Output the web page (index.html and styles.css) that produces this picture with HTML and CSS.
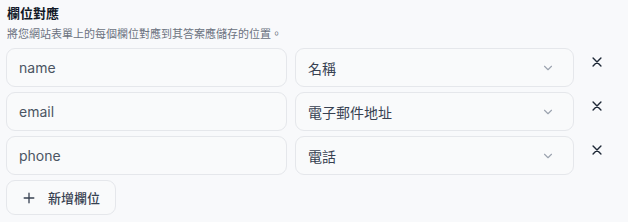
FILE: index.html
```html
<!DOCTYPE html>
<html lang="zh-Hant">
<head>
    <meta charset="UTF-8">
    <meta name="viewport" content="width=device-width, initial-scale=1.0">
    <title>欄位對應</title>
    <link rel="stylesheet" href="styles.css">
</head>
<body>
    <div class="mapping">
        <h2 class="mapping-title">欄位對應</h2>
        <p class="mapping-desc">將您網站表單上的每個欄位對應到其答案應儲存的位置。</p>

        <div class="rows">
            <div class="row">
                <input class="field-input" type="text" value="name">
                <div class="select">
                    <span>名稱</span>
                    <svg class="chevron" viewBox="0 0 16 16" width="14" height="14"><path d="M4 6l4 4 4-4" fill="none" stroke="currentColor" stroke-width="1.3" stroke-linecap="round" stroke-linejoin="round"/></svg>
                </div>
                <button class="remove" aria-label="移除">
                    <svg viewBox="0 0 16 16" width="14" height="14"><path d="M3.5 3.5l9 9M12.5 3.5l-9 9" fill="none" stroke="currentColor" stroke-width="1.6" stroke-linecap="round"/></svg>
                </button>
            </div>
            <div class="row">
                <input class="field-input" type="text" value="email">
                <div class="select">
                    <span>電子郵件地址</span>
                    <svg class="chevron" viewBox="0 0 16 16" width="14" height="14"><path d="M4 6l4 4 4-4" fill="none" stroke="currentColor" stroke-width="1.3" stroke-linecap="round" stroke-linejoin="round"/></svg>
                </div>
                <button class="remove" aria-label="移除">
                    <svg viewBox="0 0 16 16" width="14" height="14"><path d="M3.5 3.5l9 9M12.5 3.5l-9 9" fill="none" stroke="currentColor" stroke-width="1.6" stroke-linecap="round"/></svg>
                </button>
            </div>
            <div class="row">
                <input class="field-input" type="text" value="phone">
                <div class="select">
                    <span>電話</span>
                    <svg class="chevron" viewBox="0 0 16 16" width="14" height="14"><path d="M4 6l4 4 4-4" fill="none" stroke="currentColor" stroke-width="1.3" stroke-linecap="round" stroke-linejoin="round"/></svg>
                </div>
                <button class="remove" aria-label="移除">
                    <svg viewBox="0 0 16 16" width="14" height="14"><path d="M3.5 3.5l9 9M12.5 3.5l-9 9" fill="none" stroke="currentColor" stroke-width="1.6" stroke-linecap="round"/></svg>
                </button>
            </div>
        </div>

        <button class="add-button">
            <svg viewBox="0 0 16 16" width="14" height="14"><path d="M8 2.5v11M2.5 8h11" fill="none" stroke="currentColor" stroke-width="1.5" stroke-linecap="round"/></svg>
            <span>新增欄位</span>
        </button>
    </div>
</body>
</html>
```

FILE: styles.css
```css
body {
    margin: 0;
    background-color: #f8f9fb;
    font-family: 'Inter', 'Noto Sans CJK TC', sans-serif;
    color: #1f2937;
}

.mapping {
    padding: 4px 14px 0 6px;
}

.mapping-title {
    margin: 0 0 0 1px;
    font-size: 13px;
    line-height: 18px;
    font-weight: 700;
    color: #111827;
}

.mapping-desc {
    margin: 5px 0 0 1px;
    font-size: 11px;
    line-height: 14px;
    color: #6b7280;
}

.rows {
    display: flex;
    flex-direction: column;
    gap: 5px;
    margin-top: 7px;
}

.row {
    display: grid;
    grid-template-columns: 281px 279px 30px;
    gap: 8px;
    align-items: start;
}

.field-input,
.select {
    box-sizing: border-box;
    height: 39px;
    border: 1px solid #e5e7eb;
    border-radius: 9px;
    background-color: #f9fafb;
    font-size: 14px;
}

.field-input {
    width: 100%;
    padding: 0 12px;
    font-family: 'Inter', sans-serif;
    color: #4b5563;
    outline: none;
}

.select {
    display: flex;
    align-items: center;
    justify-content: space-between;
    padding: 0 18px 0 12px;
    color: #374151;
}

.chevron {
    color: #9ca3af;
}

.remove {
    display: flex;
    align-items: center;
    justify-content: center;
    width: 30px;
    height: 28px;
    padding: 0;
    border: none;
    background: none;
    color: #1f2937;
    cursor: pointer;
}

.add-button {
    display: flex;
    align-items: center;
    gap: 12px;
    box-sizing: border-box;
    height: 35px;
    margin-top: 5px;
    padding: 0 15px 0 15px;
    border: 1px solid #e5e7eb;
    border-radius: 9px;
    background-color: #f9fafb;
    font-family: 'Inter', 'Noto Sans CJK TC', sans-serif;
    font-size: 13px;
    font-weight: 500;
    color: #374151;
    cursor: pointer;
}
```
